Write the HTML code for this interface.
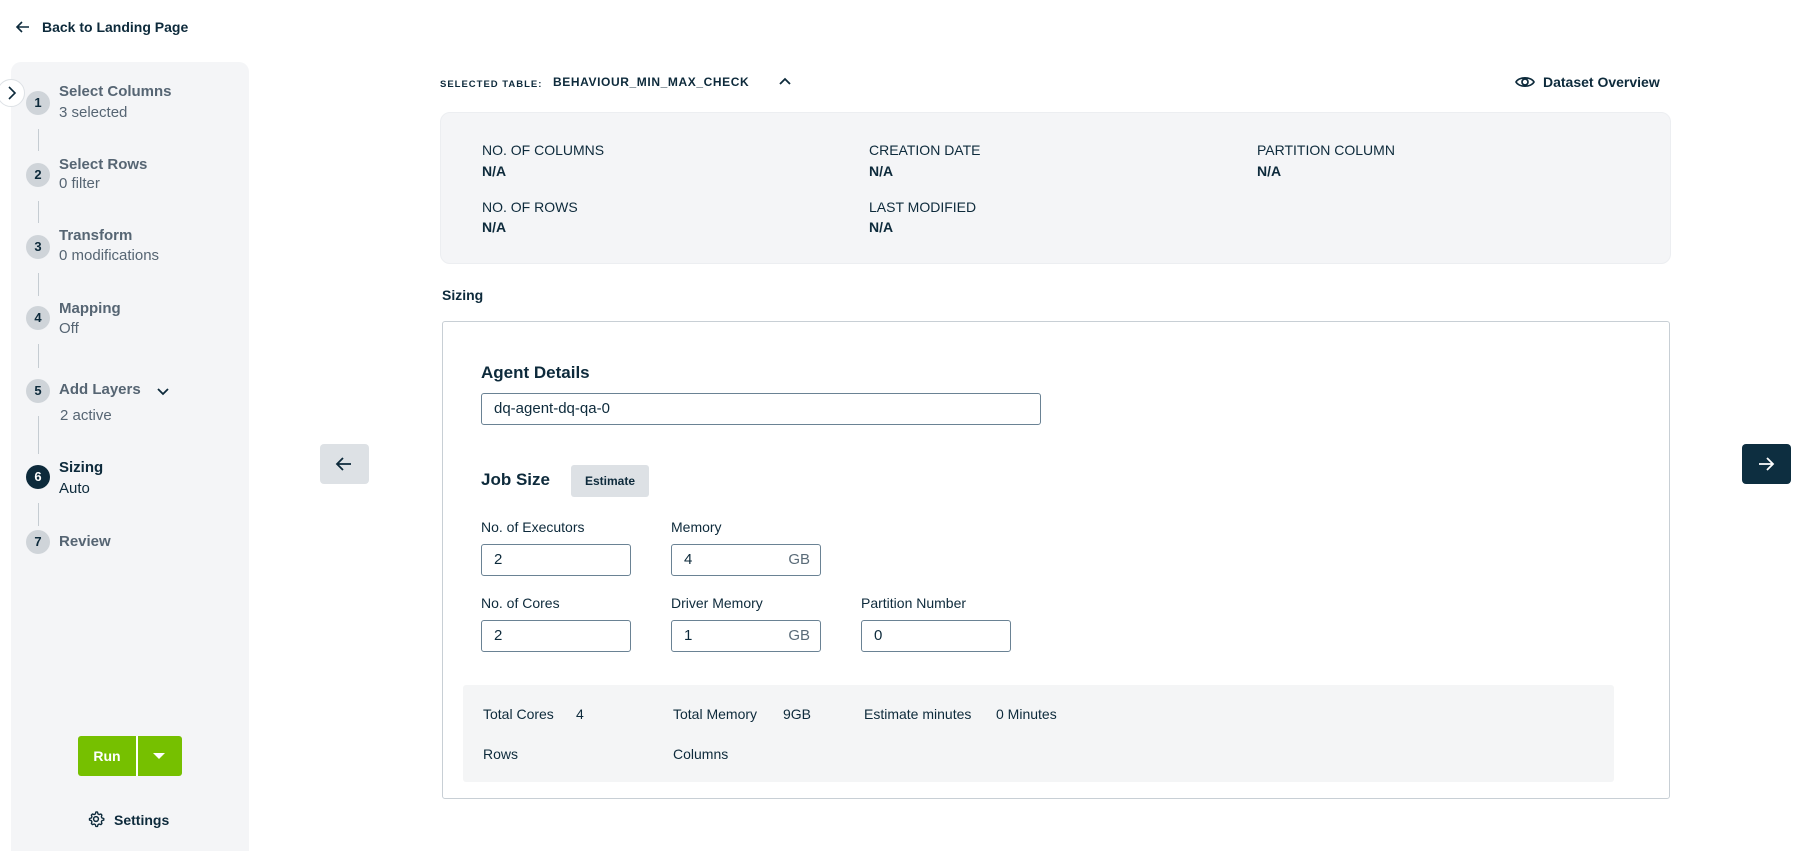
<!DOCTYPE html>
<html style="overflow:hidden"><head><meta charset="utf-8"><style>
*{box-sizing:border-box;margin:0;padding:0}
html,body{width:1808px;height:851px;overflow:hidden}
body{background:#fff;font-family:"Liberation Sans",Arial,sans-serif;color:#0d2a3b;position:relative;font-size:15px}
.a{position:absolute;white-space:nowrap;line-height:18px}
.b{font-weight:bold}
.g{color:#566573}
.circ{position:absolute;width:24px;height:24px;border-radius:50%;background:#cfd4d9;color:#0d2a3b;font-size:13px;font-weight:bold;text-align:center;line-height:24px;left:26px}
.vl{position:absolute;left:38px;width:1px;background:#c5ccd2}
.inp{position:absolute;height:32px;border:1px solid #6a8294;border-radius:3px;font-size:15px;line-height:30px;padding-left:12px;color:#0d2a3b}
.gb{position:absolute;right:10px;top:0;color:#5a6b78}
.lab{font-size:14px}
</style></head><body>
<svg class="a" style="left:15px;top:19px" width="16" height="16" viewBox="0 0 16 16"><path d="M14 8H2M7 3L2 8l5 5" fill="none" stroke="#0d2a3b" stroke-width="1.6"/></svg>
<div class="a b" style="left:42px;top:18px;font-size:14px">Back to Landing Page</div>

<div style="position:absolute;left:11px;top:62px;width:238px;height:789px;background:#f4f5f7;border-radius:10px 10px 0 0"></div>
<div style="position:absolute;left:-3px;top:79px;width:28px;height:28px;border-radius:50%;background:#fff;border:1px solid #dde1e5"></div>
<svg class="a" style="left:6px;top:85px" width="12" height="16" viewBox="0 0 12 16"><path d="M3 2l6 6-6 6" fill="none" stroke="#0d2a3b" stroke-width="1.6"/></svg>

<div class="circ" style="top:91px">1</div>
<div class="a b g" style="left:59px;top:83px">Select Columns</div>
<div class="a g" style="left:59px;top:104px">3 selected</div>
<div class="vl" style="top:129px;height:22px"></div>
<div class="circ" style="top:163px">2</div>
<div class="a b g" style="left:59px;top:156px">Select Rows</div>
<div class="a g" style="left:59px;top:175px">0 filter</div>
<div class="vl" style="top:201px;height:22px"></div>
<div class="circ" style="top:235px">3</div>
<div class="a b g" style="left:59px;top:227px">Transform</div>
<div class="a g" style="left:59px;top:247px">0 modifications</div>
<div class="vl" style="top:273px;height:23px"></div>
<div class="circ" style="top:306px">4</div>
<div class="a b g" style="left:59px;top:300px">Mapping</div>
<div class="a g" style="left:59px;top:320px">Off</div>
<div class="vl" style="top:344px;height:24px"></div>
<div class="circ" style="top:379px">5</div>
<div class="a b g" style="left:59px;top:381px">Add Layers</div>
<svg class="a" style="left:156px;top:385px" width="14" height="14" viewBox="0 0 14 14"><path d="M2 4l5 5 5-5" fill="none" stroke="#0d2a3b" stroke-width="1.8"/></svg>
<div class="a g" style="left:60px;top:407px">2 active</div>
<div class="vl" style="top:416px;height:38px"></div>
<div class="circ" style="background:#0d2a3b;color:#fff;top:465px">6</div>
<div class="a b" style="left:59px;top:459px">Sizing</div>
<div class="a" style="left:59px;top:480px">Auto</div>
<div class="vl" style="top:503px;height:23px"></div>
<div class="circ" style="top:530px">7</div>
<div class="a b g" style="left:59px;top:533px">Review</div>

<div style="position:absolute;left:78px;top:736px;width:104px;height:40px;background:#76c000;border-radius:3px"></div>
<div style="position:absolute;left:136px;top:736px;width:2px;height:40px;background:#fff"></div>
<div class="a b" style="left:78px;top:747px;width:58px;text-align:center;color:#fff;font-size:14px">Run</div>
<div style="position:absolute;left:153px;top:753px;border-left:6px solid transparent;border-right:6px solid transparent;border-top:6px solid #fff"></div>
<svg class="a" style="left:87px;top:810px" width="18" height="18" viewBox="0 0 24 24"><circle cx="12" cy="12" r="3.2" fill="none" stroke="#0d2a3b" stroke-width="2"/><path d="M12 2.5l2 .3.6 2.4 1.6.9 2.3-.8 1.4 1.5-.8 2.3.9 1.6 2.4.6v2.2l-2.4.6-.9 1.6.8 2.3-1.4 1.5-2.3-.8-1.6.9-.6 2.4h-2.2l-.6-2.4-1.6-.9-2.3.8-1.5-1.5.8-2.3-.9-1.6-2.4-.6v-2.2l2.4-.6.9-1.6-.8-2.3 1.5-1.5 2.3.8 1.6-.9.6-2.4z" fill="none" stroke="#0d2a3b" stroke-width="1.8" stroke-linejoin="round"/></svg>
<div class="a b" style="left:114px;top:811px;font-size:14px">Settings</div>

<div class="a b" style="left:440px;top:76px;font-size:9.5px;letter-spacing:1px">SELECTED TABLE:</div>
<div class="a b" style="left:553px;top:73px;font-size:12px;letter-spacing:.6px">BEHAVIOUR_MIN_MAX_CHECK</div>
<svg class="a" style="left:778px;top:75px" width="14" height="12" viewBox="0 0 14 12"><path d="M2 9l5-5 5 5" fill="none" stroke="#0d2a3b" stroke-width="1.8"/></svg>
<svg class="a" style="left:1515px;top:75px" width="20" height="14" viewBox="0 0 20 14"><path d="M1 7C4 1.5 16 1.5 19 7 16 12.5 4 12.5 1 7z" fill="none" stroke="#0d2a3b" stroke-width="1.7"/><circle cx="10" cy="7" r="3" fill="none" stroke="#0d2a3b" stroke-width="1.7"/></svg>
<div class="a b" style="left:1543px;top:73px;font-size:14px">Dataset Overview</div>

<div style="position:absolute;left:440px;top:112px;width:1231px;height:152px;background:#f4f5f7;border-radius:10px;border:1px solid #eceef1"></div>
<div class="a" style="left:482px;top:141px;font-size:14px">NO. OF COLUMNS</div>
<div class="a b" style="left:482px;top:162px;font-size:14px">N/A</div>
<div class="a" style="left:482px;top:198px;font-size:14px">NO. OF ROWS</div>
<div class="a b" style="left:482px;top:218px;font-size:14px">N/A</div>
<div class="a" style="left:869px;top:141px;font-size:14px">CREATION DATE</div>
<div class="a b" style="left:869px;top:162px;font-size:14px">N/A</div>
<div class="a" style="left:869px;top:198px;font-size:14px">LAST MODIFIED</div>
<div class="a b" style="left:869px;top:218px;font-size:14px">N/A</div>
<div class="a" style="left:1257px;top:141px;font-size:14px">PARTITION COLUMN</div>
<div class="a b" style="left:1257px;top:162px;font-size:14px">N/A</div>

<div class="a b" style="left:442px;top:286px;font-size:14px">Sizing</div>
<div style="position:absolute;left:442px;top:321px;width:1228px;height:478px;border:1px solid #c8cfd5;border-radius:3px"></div>
<div class="a b" style="left:481px;top:364px;font-size:17px">Agent Details</div>
<div class="inp" style="left:481px;top:393px;width:560px">dq-agent-dq-qa-0</div>
<div class="a b" style="left:481px;top:471px;font-size:17px">Job Size</div>
<div style="position:absolute;left:571px;top:465px;width:78px;height:32px;background:#dde1e5;border-radius:3px;font-size:12px;font-weight:bold;text-align:center;line-height:32px">Estimate</div>
<div class="a lab" style="left:481px;top:518px">No. of Executors</div>
<div class="a lab" style="left:671px;top:518px">Memory</div>
<div class="inp" style="left:481px;top:544px;width:150px">2</div>
<div class="inp" style="left:671px;top:544px;width:150px">4<span class="gb">GB</span></div>
<div class="a lab" style="left:481px;top:594px">No. of Cores</div>
<div class="a lab" style="left:671px;top:594px">Driver Memory</div>
<div class="a lab" style="left:861px;top:594px">Partition Number</div>
<div class="inp" style="left:481px;top:620px;width:150px">2</div>
<div class="inp" style="left:671px;top:620px;width:150px">1<span class="gb">GB</span></div>
<div class="inp" style="left:861px;top:620px;width:150px">0</div>

<div style="position:absolute;left:463px;top:685px;width:1151px;height:97px;background:#f4f5f6;border-radius:3px"></div>
<div class="a lab" style="left:483px;top:705px">Total Cores</div>
<div class="a lab" style="left:576px;top:705px">4</div>
<div class="a lab" style="left:673px;top:705px">Total Memory</div>
<div class="a lab" style="left:783px;top:705px">9GB</div>
<div class="a lab" style="left:864px;top:705px">Estimate minutes</div>
<div class="a lab" style="left:996px;top:705px">0 Minutes</div>
<div class="a lab" style="left:483px;top:745px">Rows</div>
<div class="a lab" style="left:673px;top:745px">Columns</div>

<div style="position:absolute;left:320px;top:444px;width:49px;height:40px;background:#dde1e5;border-radius:4px"></div>
<svg class="a" style="left:334px;top:454px" width="20" height="20" viewBox="0 0 20 20"><path d="M17 10H3M9 4l-6 6 6 6" fill="none" stroke="#0d2a3b" stroke-width="1.8"/></svg>
<div style="position:absolute;left:1742px;top:444px;width:49px;height:40px;background:#0d2e40;border-radius:4px"></div>
<svg class="a" style="left:1756px;top:454px" width="20" height="20" viewBox="0 0 20 20"><path d="M3 10h14M11 4l6 6-6 6" fill="none" stroke="#fff" stroke-width="1.8"/></svg>
</body></html>
